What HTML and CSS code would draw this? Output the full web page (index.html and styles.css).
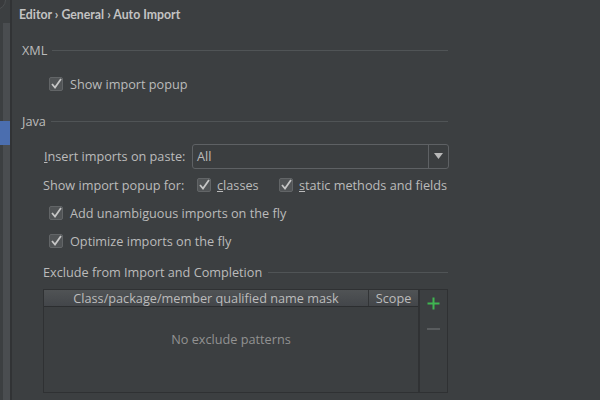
FILE: index.html
```html
<!DOCTYPE html>
<html>
<head>
<meta charset="utf-8">
<link rel="stylesheet" href="styles.css">
</head>
<body>
<div class="app">
  <aside class="sidebar">
    <div class="search-end"></div>
    <div class="tree-edge"><div class="tree-sel"></div></div>
  </aside>
  <main class="content">
    <div class="crumbs">Editor › General › Auto Import</div>

    <section class="group group-xml">
      <div class="group-title"><span>XML</span><i class="rule"></i></div>
      <label class="check row-xml">
        <span class="box"><svg viewBox="0 0 14 14" width="14" height="14"><path d="M3 7 L6 10.5 L12 2" /></svg></span>
        <span>Show import popup</span>
      </label>
    </section>

    <section class="group group-java">
      <div class="group-title"><span>Java</span><i class="rule"></i></div>
      <div class="row-insert">
        <span class="field-label"><u>I</u>nsert imports on paste:</span>
        <div class="combo">
          <span class="combo-value">All</span>
          <span class="combo-arrow"><svg viewBox="0 0 9 6" width="9" height="6"><path d="M0 0 H9 L4.5 6 Z" /></svg></span>
        </div>
      </div>
      <div class="row-popup">
        <span class="field-label popup-label">Show import popup for:</span>
        <label class="check check-classes">
          <span class="box"><svg viewBox="0 0 14 14" width="14" height="14"><path d="M3 7 L6 10.5 L12 2" /></svg></span>
          <span><u>c</u>lasses</span>
        </label>
        <label class="check">
          <span class="box"><svg viewBox="0 0 14 14" width="14" height="14"><path d="M3 7 L6 10.5 L12 2" /></svg></span>
          <span><u>s</u>tatic methods and fields</span>
        </label>
      </div>
      <label class="check row-java row-add">
        <span class="box"><svg viewBox="0 0 14 14" width="14" height="14"><path d="M3 7 L6 10.5 L12 2" /></svg></span>
        <span>Add unambiguous imports on the fly</span>
      </label>
      <label class="check row-java row-opt">
        <span class="box"><svg viewBox="0 0 14 14" width="14" height="14"><path d="M3 7 L6 10.5 L12 2" /></svg></span>
        <span>Optimize imports on the fly</span>
      </label>

      <div class="exclude">
        <div class="group-title sub-title"><span>Exclude from Import and Completion</span><i class="rule"></i></div>
        <div class="table-box">
          <div class="table">
            <div class="thead">
              <div class="th th-name">Class/package/member qualified name mask</div>
              <div class="th th-scope">Scope</div>
            </div>
            <div class="tbody">No exclude patterns</div>
          </div>
          <div class="toolbar">
            <span class="tool-add"><svg viewBox="0 0 13 13" width="13" height="13"><path d="M6.5 0.5 V12.5 M0.5 6.5 H12.5" /></svg></span>
            <span class="tool-remove"></span>
          </div>
        </div>
      </div>
    </section>
  </main>
</div>
</body>
</html>
```

FILE: styles.css
```css
* { box-sizing: border-box; }
html, body {
  margin: 0;
  padding: 0;
  width: 600px;
  height: 400px;
  overflow: hidden;
  background: #3c3f41;
}
body {
  font-family: "Open Sans", "Noto Sans", sans-serif;
  font-size: 12.7px;
  color: #bbbbbb;
}
.app {
  display: flex;
  height: 400px;
}
.sidebar {
  width: 12px;
  flex: none;
  display: flex;
  flex-direction: column;
  border-right: 2px solid #313335;
  overflow: hidden;
}
.search-end {
  width: 20px;
  height: 20px;
  margin-left: -14px;
  margin-top: -10px;
  border-radius: 50%;
  background: #393b3d;
  border: 1px solid #4c4f51;
  flex: none;
}
.tree-edge {
  margin-top: 13px;
  margin-left: 3px;
  flex: 1;
  background: #4a4d50;
}
.tree-sel {
  margin-top: 98px;
  margin-left: -3px;
  height: 24px;
  background: #4b6eaf;
}
.content {
  flex: 1;
  padding-left: 10px;
}
.crumbs {
  height: 30px;
  line-height: 30px;
  margin-left: -3px;
  font-family: "Lato", "Open Sans", sans-serif;
  font-weight: bold;
  font-size: 12.3px;
  color: #c3c3c3;
}
.group {
  width: 426px;
}
.group-title {
  display: flex;
  align-items: center;
  gap: 5px;
  height: 18px;
}
.group-xml .group-title { margin-top: 11px; }
.group-java > .group-title { margin-top: 18px; }
.rule {
  flex: 1;
  height: 1px;
  background: #505456;
}
.check {
  display: flex;
  align-items: center;
  gap: 7px;
  height: 20px;
}
.box {
  width: 14px;
  height: 14px;
  flex: none;
  background: #515456;
  border: 1px solid #626567;
  border-radius: 2px;
  display: flex;
}
.box svg {
  margin: -1px;
}
.box path {
  fill: none;
  stroke: #c6c6c6;
  stroke-width: 1.8;
}
.row-xml {
  margin-top: 15px;
  padding-left: 27px;
}
.row-insert {
  display: flex;
  align-items: center;
  margin-top: 14px;
  margin-left: 22px;
  width: 405px;
  height: 24px;
}
.field-label {
  width: 148px;
  flex: none;
}
.combo {
  flex: 1;
  height: 25px;
  display: flex;
  border: 1px solid #5e6164;
  border-radius: 3px;
  background: #3b3e40;
}
.combo-value {
  flex: 1;
  padding-left: 4px;
  line-height: 23px;
}
.combo-arrow {
  width: 20px;
  border-left: 1px solid #5e6164;
  display: flex;
  align-items: center;
  justify-content: center;
}
.combo-arrow path { fill: #b8b8b8; }
.row-popup {
  display: flex;
  align-items: center;
  margin-top: 7px;
  margin-left: 21px;
  height: 20px;
}
.popup-label { width: 154px; }
.check-classes {
  width: 82px;
}
.row-popup .check { gap: 6px; }
.row-java {
  padding-left: 27px;
}
.row-add { margin-top: 8px; }
.row-opt { margin-top: 8px; }
.exclude {
  margin-left: 21px;
  width: 405px;
}
.sub-title {
  margin-top: 12px;
  gap: 6px;
}
.table-box {
  margin-top: 8px;
  height: 104px;
  display: flex;
  border: 1px solid #2f3133;
}
.table {
  width: 376px;
  flex: none;
  display: flex;
  flex-direction: column;
  border-right: 2px solid #303234;
}
.thead {
  display: flex;
  height: 17px;
  background: linear-gradient(#505355, #43464a);
  border-bottom: 1px solid #2c2e30;
  line-height: 16px;
}
.th {
  text-align: center;
  color: #bcbcbc;
}
.th-name {
  width: 325px;
  border-right: 1px solid #323436;
}
.th-scope {
  flex: 1;
}
.tbody {
  flex: 1;
  text-align: center;
  padding-top: 23px;
  color: #929292;
}
.toolbar {
  flex: 1;
  display: flex;
  flex-direction: column;
  align-items: center;
  padding-top: 7px;
}
.tool-add path {
  stroke: #3fb551;
  stroke-width: 2;
  fill: none;
}
.tool-add { display: flex; }
.tool-remove {
  margin-top: 18px;
  width: 13px;
  height: 2px;
  background: #595c5e;
}
```
